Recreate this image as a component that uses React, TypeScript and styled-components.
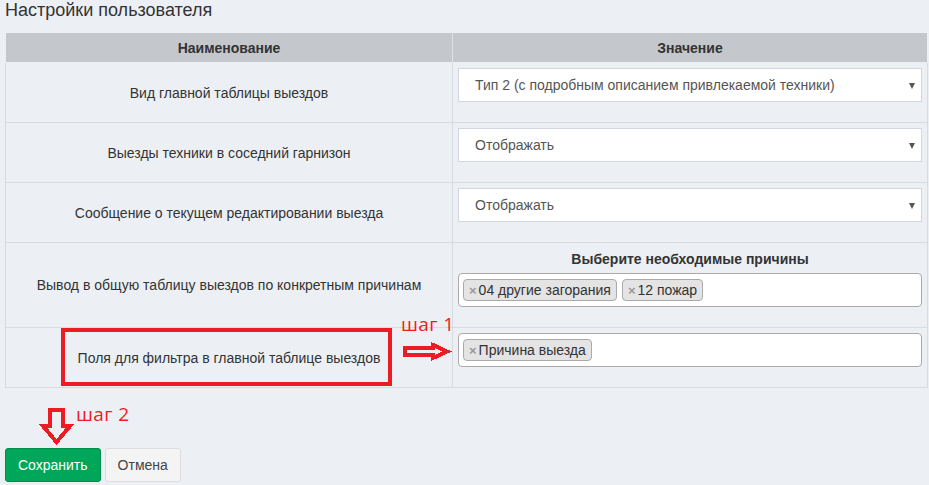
import React from "react";
import styled, { createGlobalStyle } from "styled-components";

const GlobalStyle = createGlobalStyle`
  html, body {
    margin: 0;
    padding: 0;
    background: #ecf0f5;
  }
  body {
    font-family: "Liberation Sans", Arial, sans-serif;
    color: #333;
    font-size: 14px;
  }
`;

const Page = styled.div`
  position: relative;
  padding: 0 2px 0 5px;
  font-family: "Liberation Sans", Arial, sans-serif;
`;

const Title = styled.h3`
  margin: 0 0 12px 0;
  font-size: 18px;
  line-height: 20px;
  font-weight: normal;
  color: #333;
`;

const Table = styled.table`
  width: 922px;
  border-collapse: collapse;
  table-layout: fixed;
`;

const HeadCell = styled.th<{ $divider?: boolean }>`
  height: 29px;
  padding: 0 8px;
  background: #c4c7cb;
  border: 1px solid #ecf0f5;
  border-right-color: ${(p) => (p.$divider ? "#dde0e4" : "#ecf0f5")};
  font-size: 14px;
  font-weight: bold;
  color: #333;
  text-align: center;
  vertical-align: middle;
`;

const NameCell = styled.td`
  border: 1px solid #d8dbe0;
  padding: 0 8px;
  text-align: center;
  vertical-align: middle;
  font-size: 14px;
  line-height: 20px;
  color: #333;
`;

const ValueCell = styled.td`
  border: 1px solid #d8dbe0;
  padding: 5px 5px 20px 5px;
  vertical-align: top;
`;

const Select = styled.div`
  position: relative;
  box-sizing: border-box;
  height: 34px;
  display: flex;
  align-items: center;
  padding: 0 24px 0 16px;
  background: #fff;
  border: 1px solid #d2d6de;
  font-size: 14px;
  color: #555;
  white-space: nowrap;
  overflow: hidden;
`;

const Caret = styled.span`
  position: absolute;
  right: 6px;
  top: 14px;
  width: 0;
  height: 0;
  border-left: 3.5px solid transparent;
  border-right: 3.5px solid transparent;
  border-top: 6px solid #555;
`;

const GroupLabel = styled.div`
  font-weight: bold;
  font-size: 14px;
  line-height: 20px;
  text-align: center;
  color: #333;
  margin: 1px 0 4px;
`;

const MultiBox = styled.div`
  box-sizing: border-box;
  height: 34px;
  display: flex;
  align-items: flex-start;
  gap: 5px;
  padding: 5px 4px 0;
  background: #fff;
  border: 1px solid #aaa;
  border-radius: 4px;
`;

const Tag = styled.span`
  box-sizing: border-box;
  display: inline-flex;
  align-items: center;
  height: 22px;
  padding: 0 5px;
  background: #e4e4e4;
  border: 1px solid #aaa;
  border-radius: 4px;
  font-size: 14px;
  color: #333;
  white-space: nowrap;
`;

const TagX = styled.span`
  color: #999;
  font-weight: bold;
  font-size: 13px;
  margin-right: 2px;
`;

const Footer = styled.div`
  display: flex;
  gap: 4px;
  margin-top: 60px;
`;

const Button = styled.button<{ $primary?: boolean }>`
  box-sizing: border-box;
  height: 34px;
  padding: 0 12px;
  font-family: "Liberation Sans", Arial, sans-serif;
  font-size: 14px;
  border-radius: 3px;
  border: 1px solid ${(p) => (p.$primary ? "#008d4c" : "#ddd")};
  background: ${(p) => (p.$primary ? "#00a65a" : "#f4f4f4")};
  color: ${(p) => (p.$primary ? "#fff" : "#444")};
  cursor: pointer;
`;

const Highlight = styled.div`
  position: absolute;
  left: 61px;
  top: 328px;
  width: 331px;
  height: 58px;
  box-sizing: border-box;
  border: 4px solid #ed1c24;
  pointer-events: none;
`;

const StepLabel = styled.span<{ $left: number; $top: number }>`
  position: absolute;
  left: ${(p) => p.$left}px;
  top: ${(p) => p.$top}px;
  font-family: "Open Sans", "Liberation Sans", sans-serif;
  font-size: 19px;
  line-height: 20px;
  letter-spacing: 0.4px;
  color: #ed1c24;
  white-space: nowrap;
`;

const ArrowSvg = styled.svg<{ $left: number; $top: number }>`
  position: absolute;
  left: ${(p) => p.$left}px;
  top: ${(p) => p.$top}px;
  overflow: visible;
  pointer-events: none;
`;

type Row = { name: string; value: React.ReactNode };

const SelectBox = ({ text }: { text: string }) => (
  <Select>
    {text}
    <Caret />
  </Select>
);

const TagItem = ({ label }: { label: string }) => (
  <Tag>
    <TagX>×</TagX>
    {label}
  </Tag>
);

const rows: Row[] = [
  {
    name: "Вид главной таблицы выездов",
    value: <SelectBox text="Тип 2 (с подробным описанием привлекаемой техники)" />,
  },
  {
    name: "Выезды техники в соседний гарнизон",
    value: <SelectBox text="Отображать" />,
  },
  {
    name: "Сообщение о текущем редактировании выезда",
    value: <SelectBox text="Отображать" />,
  },
  {
    name: "Вывод в общую таблицу выездов по конкретным причинам",
    value: (
      <>
        <GroupLabel>Выберите необходимые причины</GroupLabel>
        <MultiBox>
          <TagItem label="04 другие загорания" />
          <TagItem label="12 пожар" />
        </MultiBox>
      </>
    ),
  },
  {
    name: "Поля для фильтра в главной таблице выездов",
    value: (
      <MultiBox>
        <TagItem label="Причина выезда" />
      </MultiBox>
    ),
  },
];

export default function App() {
  return (
    <>
      <GlobalStyle />
      <Page>
        <Title>Настройки пользователя</Title>
        <Table>
          <colgroup>
            <col style={{ width: 447 }} />
            <col style={{ width: 475 }} />
          </colgroup>
          <thead>
            <tr>
              <HeadCell $divider>Наименование</HeadCell>
              <HeadCell>Значение</HeadCell>
            </tr>
          </thead>
          <tbody>
            {rows.map((r) => (
              <tr key={r.name}>
                <NameCell>{r.name}</NameCell>
                <ValueCell>{r.value}</ValueCell>
              </tr>
            ))}
          </tbody>
        </Table>
        <Footer>
          <Button $primary>Сохранить</Button>
          <Button>Отмена</Button>
        </Footer>

        <Highlight />
        <StepLabel $left={401} $top={314}>шаг 1</StepLabel>
        <ArrowSvg $left={401} $top={341} width={52} height={22} shapeRendering="crispEdges">
          <polygon
            points="4,7 32,7 32,4 46,10.5 32,17 32,14 4,14"
            fill="none"
            stroke="#ed1c24"
            strokeWidth={4}
            strokeLinejoin="miter"
          />
        </ArrowSvg>
        <StepLabel $left={76} $top={404}>шаг 2</StepLabel>
        <ArrowSvg $left={40} $top={406} width={34} height={42} shapeRendering="crispEdges">
          <polygon
            points="10,4 23,4 23,20 30,20 16.5,36 3,20 10,20"
            fill="none"
            stroke="#ed1c24"
            strokeWidth={4}
            strokeLinejoin="miter"
          />
        </ArrowSvg>
      </Page>
    </>
  );
}
